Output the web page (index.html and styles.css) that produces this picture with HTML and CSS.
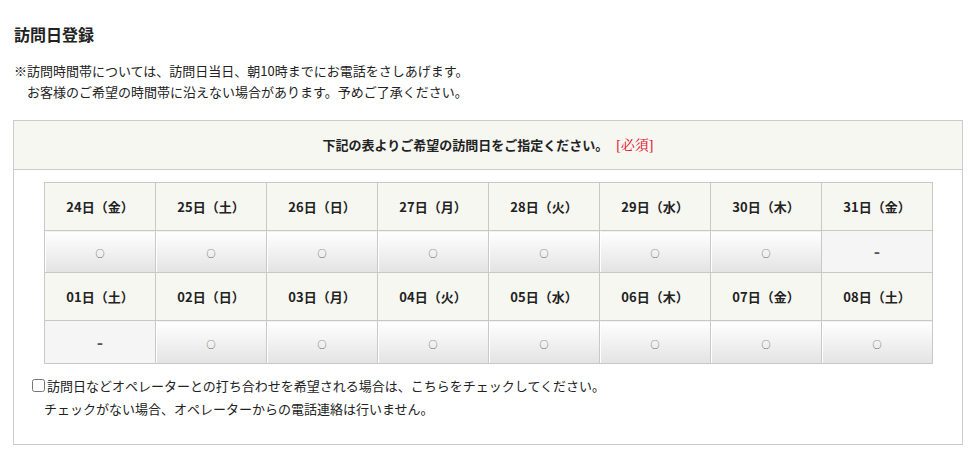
FILE: index.html
```html
<!DOCTYPE html>
<html lang="ja">
<head>
<meta charset="utf-8">
<title>訪問日登録</title>
<link rel="stylesheet" href="styles.css">
</head>
<body>
<div class="page">
  <h2 class="title">訪問日登録</h2>
  <p class="note">※訪問時間帯については、訪問日当日、朝10時までにお電話をさしあげます。<br><span class="indent">お客様のご希望の時間帯に沿えない場合があります。予めご了承ください。</span></p>
  <div class="box">
    <div class="box-head">下記の表よりご希望の訪問日をご指定ください。<span class="req">[必須]</span></div>
    <div class="box-body">
      <table class="cal">
        <tr class="hd">
          <th>24日（金）</th><th>25日（土）</th><th>26日（日）</th><th>27日（月）</th><th>28日（火）</th><th>29日（水）</th><th>30日（木）</th><th>31日（金）</th>
        </tr>
        <tr class="val">
          <td class="ok"><span class="mark">○</span></td><td class="ok"><span class="mark">○</span></td><td class="ok"><span class="mark">○</span></td><td class="ok"><span class="mark">○</span></td><td class="ok"><span class="mark">○</span></td><td class="ok"><span class="mark">○</span></td><td class="ok"><span class="mark">○</span></td><td class="ng"><span class="dash">-</span></td>
        </tr>
        <tr class="hd">
          <th>01日（土）</th><th>02日（日）</th><th>03日（月）</th><th>04日（火）</th><th>05日（水）</th><th>06日（木）</th><th>07日（金）</th><th>08日（土）</th>
        </tr>
        <tr class="val last">
          <td class="ng"><span class="dash">-</span></td><td class="ok"><span class="mark">○</span></td><td class="ok"><span class="mark">○</span></td><td class="ok"><span class="mark">○</span></td><td class="ok"><span class="mark">○</span></td><td class="ok"><span class="mark">○</span></td><td class="ok"><span class="mark">○</span></td><td class="ok"><span class="mark">○</span></td>
        </tr>
      </table>
      <div class="check">
        <label class="check-line"><input type="checkbox" class="cb">訪問日などオペレーターとの打ち合わせを希望される場合は、こちらをチェックしてください。</label>
        <p class="check-sub">チェックがない場合、オペレーターからの電話連絡は行いません。</p>
      </div>
    </div>
  </div>
</div>
</body>
</html>
```
FILE: styles.css
```css
html, body {
  margin: 0;
  padding: 0;
  background: #fff;
}
body {
  font-family: "Noto Sans CJK JP", "Noto Sans", sans-serif;
  color: #222;
  font-size: 13px;
}
.page {
  padding: 22px 8px 0 13px;
  width: 950px;
}
.title {
  margin: 0 0 0 1px;
  font-size: 16px;
  line-height: 24px;
  font-weight: bold;
  color: #222;
}
.note {
  margin: 14px 0 0 1px;
  line-height: 21px;
  font-size: 13px;
}
.indent {
  padding-left: 13px;
}
.box {
  margin-top: 18px;
  border: 1px solid #ccc;
}
.box-head {
  height: 48px;
  line-height: 48px;
  background: #f7f7f2;
  border-bottom: 1px solid #ccc;
  text-align: center;
  font-weight: bold;
  font-size: 13px;
}
.req {
  color: #e0102a;
  font-weight: normal;
  font-family: "Liberation Serif", "Noto Serif CJK JP", "Noto Sans CJK JP", serif;
  font-size: 14px;
  margin-left: 8px;
}
.box-body {
  padding: 12px 29px 24px 30px;
}
.cal {
  border-collapse: collapse;
  width: 889px;
  table-layout: fixed;
}
.cal th, .cal td {
  border: 1px solid #c8c8c8;
  text-align: center;
  padding: 0;
}
.cal th {
  height: 47px;
  background: #f7f7f2;
  font-weight: bold;
  font-size: 13px;
}
.cal td {
  height: 41px;
}
.cal tr.last td {
  height: 42px;
}
.cal td.ok {
  background: linear-gradient(#ffffff, #e3e3e3);
  box-shadow: inset 1px 0 0 #fff;
}
.cal td.ng {
  background: #f5f5f5;
}
.mark {
  font-size: 9px;
  color: #444;
}
.dash {
  font-weight: bold;
  font-size: 17px;
  line-height: 20px;
  color: #555;
}
.check {
  margin-top: 10px;
  line-height: 23px;
}
.check-line {
  display: flex;
  align-items: center;
  margin-left: -12px;
}
.cb {
  width: 13px;
  height: 13px;
  margin: 0 2px 0 0;
}
.check-sub {
  margin: 0;
}
```
